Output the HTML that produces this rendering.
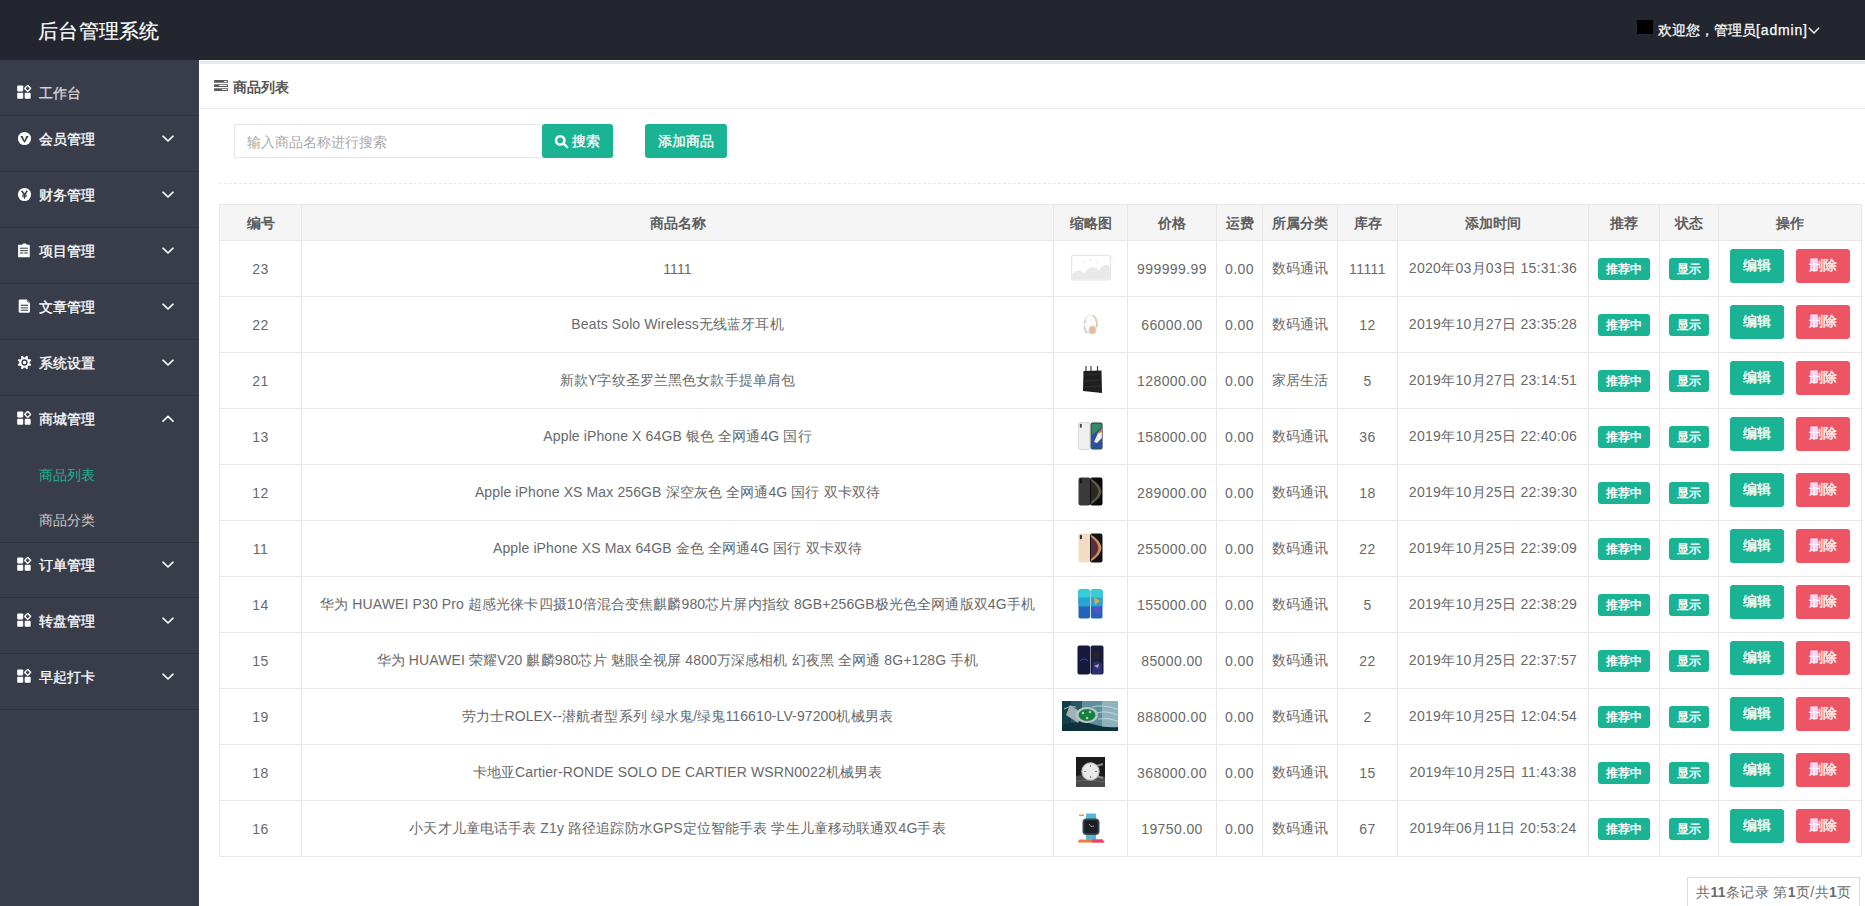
<!DOCTYPE html>
<html><head><meta charset="utf-8">
<style>
*{margin:0;padding:0;box-sizing:border-box}
html,body{width:1865px;height:906px;overflow:hidden;background:#fff;font-family:"Liberation Sans",sans-serif;font-size:14px;color:#666}
.hd{position:absolute;left:0;top:0;width:1865px;height:60px;background:#23262E}
.logo{position:absolute;left:38px;top:17px;font-size:20px;line-height:28px;color:#fff;letter-spacing:.3px;-webkit-text-stroke-width:.2px}
.user{position:absolute;left:1637px;top:19px;height:22px;color:#fff;font-size:14px;line-height:22px;white-space:nowrap}
.user .sq{position:absolute;left:0;top:1px;width:16px;height:14px;background:#000}
.user .t{position:absolute;left:21px;top:0;-webkit-text-stroke-width:.25px}
.side{position:absolute;left:0;top:60px;width:199px;height:846px;background:#393D49}
.it{position:absolute;left:0;width:199px;height:45px;line-height:45px;color:#fff}
.it .ic{position:absolute;left:17px;top:15px;width:15px;height:15px}
.it .tx{position:absolute;left:39px;top:1px;-webkit-text-stroke-width:.3px}
.it .ar{position:absolute;left:162px;top:19px;width:12px;height:8px}
.sep{position:absolute;left:0;width:199px;height:1px;background:#2F323B}
.sub{position:absolute;left:39px;height:45px;line-height:45px;color:#ccc;padding-top:1px}
.main{position:absolute;left:199px;top:60px;width:1666px;height:846px;background:#fff}
.strip{position:absolute;left:1px;top:1px;width:1665px;height:3px;background:#E6E7EC}
.ttl{position:absolute;left:1px;top:5px;width:1665px;height:44px;border-bottom:1px solid #e7eaec}
.ttl .ic{position:absolute;left:15px;top:20px}
.ttl .tx{position:absolute;left:33px;top:12px;line-height:20px;font-weight:bold;color:#555;font-size:14px}
.inp{position:absolute;left:35px;top:64px;width:308px;height:34px;border:1px solid #e5e6e7;border-right:none;border-radius:2px 0 0 2px;color:#aaa;font-size:14px;line-height:34px;padding-left:12px}
.btn{position:absolute;height:34px;line-height:34px;color:#fff;background:#1AB394;border-radius:3px;text-align:center;font-size:14px;-webkit-text-stroke-width:.3px}
.dash{position:absolute;left:20px;top:123px;width:1646px;height:1px;border-top:1px dashed #e7eaec}
table{position:absolute;left:20px;top:144px;border-collapse:collapse;table-layout:fixed}
th,td{border:1px solid #e7e7e7;text-align:center;padding:0;overflow:hidden;white-space:nowrap}
th{height:36px;padding-top:2px;background:#F5F5F6;font-weight:bold;color:#5d5d5d;font-size:14px}
td{height:56px;padding-top:1px;color:#676a6c;font-size:14px;letter-spacing:.12px}
td.n{letter-spacing:.4px}
td.d{letter-spacing:.28px}
.bdg{display:inline-block;height:22px;line-height:22px;color:#fff;background:#1AB394;border-radius:3px;font-size:12px;font-weight:bold;vertical-align:middle;position:relative;top:0}
.ob{display:inline-block;width:54px;height:34px;line-height:32px;color:#fff;border-radius:3px;font-size:14px;-webkit-text-stroke-width:.35px;vertical-align:middle;position:relative;top:-3px}
.pg{position:absolute;left:1488px;top:817px;width:173px;height:40px;border:1px solid #ddd;border-bottom:none;font-size:14px;line-height:29px;padding-left:8px;color:#676a6c;letter-spacing:.38px;white-space:nowrap}

.bs{padding-left:17px}
.user .t{letter-spacing:0}

</style></head><body>
<div class="hd">
  <div class="logo">后台管理系统</div>
  <div class="user"><span class="sq"></span><span class="t">欢迎您，管理员<span style="letter-spacing:.85px">[admin]</span></span></div>
  <svg style="position:absolute;left:1807px;top:26px" width="14" height="10" viewBox="0 0 14 10"><path d="M1.8 1.8 L7 7 L12.2 1.8" fill="none" stroke="#fff" stroke-width="1.4"/></svg>
</div>
<div class="side">
<div class="it" style="top:10px;color:rgba(255,255,255,.75)"><svg class="ic" width="16" height="16" viewBox="0 0 16 16"><rect x="0.2" y="0.4" width="6.4" height="6.4" rx="1" fill="#fff"/><rect x="9.1" y="1.3" width="4.6" height="4.6" rx="0.6" transform="rotate(45 11.4 3.6)" fill="none" stroke="#fff" stroke-width="1.5"/><rect x="0.2" y="8.3" width="6.4" height="6.4" rx="1" fill="#fff"/><rect x="8.2" y="8.3" width="6.4" height="6.4" rx="1" fill="#fff"/></svg><span class="tx">工作台</span></div>
<div class="it" style="top:56px"><svg class="ic" width="16" height="16" viewBox="0 0 16 16"><circle cx="8" cy="8" r="7" fill="#fff"/><path d="M3.6 5.2 L6 5.2 L8 10.2 L10 5.2 L12.4 5.2 L8.4 12.2 L7.6 12.2 Z" fill="#393D49"/></svg><span class="tx">会员管理</span><svg class="ar" width="12" height="8" viewBox="0 0 12 8"><path d="M1 1.2 L6 6 L11 1.2" fill="none" stroke="#fff" stroke-width="1.6" stroke-linecap="round" stroke-linejoin="round"/></svg></div>
<div class="it" style="top:112px"><svg class="ic" width="16" height="16" viewBox="0 0 16 16"><circle cx="8" cy="8" r="7" fill="#fff"/><path d="M5 4 L8 8.2 L11 4" fill="none" stroke="#393D49" stroke-width="1.6"/><path d="M8 8 V12.5 M5.6 8.6 H10.4 M5.6 10.4 H10.4" fill="none" stroke="#393D49" stroke-width="1.2"/></svg><span class="tx">财务管理</span><svg class="ar" width="12" height="8" viewBox="0 0 12 8"><path d="M1 1.2 L6 6 L11 1.2" fill="none" stroke="#fff" stroke-width="1.6" stroke-linecap="round" stroke-linejoin="round"/></svg></div>
<div class="it" style="top:168px"><svg class="ic" width="16" height="16" viewBox="0 0 16 16"><path d="M1.2 1.8 H5.5 L6.5 0.6 H9.5 L10.5 1.8 H13.6 V15.2 H1.2 Z" fill="#fff"/><rect x="3.2" y="5" width="8.4" height="1.1" fill="#393D49"/><rect x="3.2" y="7.6" width="8.4" height="1.1" fill="#393D49"/><rect x="3.2" y="10.1" width="3.6" height="1.1" fill="#393D49"/><rect x="7.8" y="10.1" width="3.8" height="1.1" fill="#393D49"/></svg><span class="tx">项目管理</span><svg class="ar" width="12" height="8" viewBox="0 0 12 8"><path d="M1 1.2 L6 6 L11 1.2" fill="none" stroke="#fff" stroke-width="1.6" stroke-linecap="round" stroke-linejoin="round"/></svg></div>
<div class="it" style="top:224px"><svg class="ic" width="16" height="16" viewBox="0 0 16 16"><path d="M3.3 0.6 H10.6 L13.8 3.8 V13.2 Q13.8 14.7 12.3 14.7 H3.3 Q1.8 14.7 1.8 13.2 V2.1 Q1.8 0.6 3.3 0.6 Z" fill="#fff"/><path d="M10.6 0.9 Q10.9 3.4 13.6 3.9" fill="none" stroke="#6b6f7a" stroke-width="1.1"/><rect x="4" y="6.1" width="7.8" height="1.2" fill="#393D49"/><rect x="4" y="8.9" width="7.8" height="1.1" fill="#393D49"/><rect x="4" y="11.4" width="7.8" height="1.1" fill="#393D49"/></svg><span class="tx">文章管理</span><svg class="ar" width="12" height="8" viewBox="0 0 12 8"><path d="M1 1.2 L6 6 L11 1.2" fill="none" stroke="#fff" stroke-width="1.6" stroke-linecap="round" stroke-linejoin="round"/></svg></div>
<div class="it" style="top:280px"><svg class="ic" width="16" height="16" viewBox="0 0 16 16"><path d="M8.58 2.83 L9.78 0.82 L11.82 1.66 L11.24 3.93 L11.68 4.32 L12.07 4.76 L14.34 4.18 L15.18 6.22 L13.17 7.42 L13.20 8.00 L13.17 8.58 L15.18 9.78 L14.34 11.82 L12.07 11.24 L11.68 11.68 L11.24 12.07 L11.82 14.34 L9.78 15.18 L8.58 13.17 L8.00 13.20 L7.42 13.17 L6.22 15.18 L4.18 14.34 L4.76 12.07 L4.32 11.68 L3.93 11.24 L1.66 11.82 L0.82 9.78 L2.83 8.58 L2.80 8.00 L2.83 7.42 L0.82 6.22 L1.66 4.18 L3.93 4.76 L4.32 4.32 L4.76 3.93 L4.18 1.66 L6.22 0.82 L7.42 2.83 L8.00 2.80 Z" fill="#fff"/><circle cx="8" cy="8" r="5.3" fill="#fff"/><circle cx="8" cy="8" r="2.6" fill="none" stroke="#393D49" stroke-width="1.5"/></svg><span class="tx">系统设置</span><svg class="ar" width="12" height="8" viewBox="0 0 12 8"><path d="M1 1.2 L6 6 L11 1.2" fill="none" stroke="#fff" stroke-width="1.6" stroke-linecap="round" stroke-linejoin="round"/></svg></div>
<div class="it" style="top:336px"><svg class="ic" width="16" height="16" viewBox="0 0 16 16"><rect x="0.2" y="0.4" width="6.4" height="6.4" rx="1" fill="#fff"/><rect x="9.1" y="1.3" width="4.6" height="4.6" rx="0.6" transform="rotate(45 11.4 3.6)" fill="none" stroke="#fff" stroke-width="1.5"/><rect x="0.2" y="8.3" width="6.4" height="6.4" rx="1" fill="#fff"/><rect x="8.2" y="8.3" width="6.4" height="6.4" rx="1" fill="#fff"/></svg><span class="tx">商城管理</span><svg class="ar" width="12" height="8" viewBox="0 0 12 8"><path d="M1 6.2 L6 1.4 L11 6.2" fill="none" stroke="#fff" stroke-width="1.6" stroke-linecap="round" stroke-linejoin="round"/></svg></div>
<div class="it" style="top:482px"><svg class="ic" width="16" height="16" viewBox="0 0 16 16"><rect x="0.2" y="0.4" width="6.4" height="6.4" rx="1" fill="#fff"/><rect x="9.1" y="1.3" width="4.6" height="4.6" rx="0.6" transform="rotate(45 11.4 3.6)" fill="none" stroke="#fff" stroke-width="1.5"/><rect x="0.2" y="8.3" width="6.4" height="6.4" rx="1" fill="#fff"/><rect x="8.2" y="8.3" width="6.4" height="6.4" rx="1" fill="#fff"/></svg><span class="tx">订单管理</span><svg class="ar" width="12" height="8" viewBox="0 0 12 8"><path d="M1 1.2 L6 6 L11 1.2" fill="none" stroke="#fff" stroke-width="1.6" stroke-linecap="round" stroke-linejoin="round"/></svg></div>
<div class="it" style="top:538px"><svg class="ic" width="16" height="16" viewBox="0 0 16 16"><rect x="0.2" y="0.4" width="6.4" height="6.4" rx="1" fill="#fff"/><rect x="9.1" y="1.3" width="4.6" height="4.6" rx="0.6" transform="rotate(45 11.4 3.6)" fill="none" stroke="#fff" stroke-width="1.5"/><rect x="0.2" y="8.3" width="6.4" height="6.4" rx="1" fill="#fff"/><rect x="8.2" y="8.3" width="6.4" height="6.4" rx="1" fill="#fff"/></svg><span class="tx">转盘管理</span><svg class="ar" width="12" height="8" viewBox="0 0 12 8"><path d="M1 1.2 L6 6 L11 1.2" fill="none" stroke="#fff" stroke-width="1.6" stroke-linecap="round" stroke-linejoin="round"/></svg></div>
<div class="it" style="top:594px"><svg class="ic" width="16" height="16" viewBox="0 0 16 16"><rect x="0.2" y="0.4" width="6.4" height="6.4" rx="1" fill="#fff"/><rect x="9.1" y="1.3" width="4.6" height="4.6" rx="0.6" transform="rotate(45 11.4 3.6)" fill="none" stroke="#fff" stroke-width="1.5"/><rect x="0.2" y="8.3" width="6.4" height="6.4" rx="1" fill="#fff"/><rect x="8.2" y="8.3" width="6.4" height="6.4" rx="1" fill="#fff"/></svg><span class="tx">早起打卡</span><svg class="ar" width="12" height="8" viewBox="0 0 12 8"><path d="M1 1.2 L6 6 L11 1.2" fill="none" stroke="#fff" stroke-width="1.6" stroke-linecap="round" stroke-linejoin="round"/></svg></div>
<div class="sep" style="top:55px"></div>
<div class="sep" style="top:111px"></div>
<div class="sep" style="top:167px"></div>
<div class="sep" style="top:223px"></div>
<div class="sep" style="top:279px"></div>
<div class="sep" style="top:335px"></div>
<div class="sep" style="top:482px"></div>
<div class="sep" style="top:537px"></div>
<div class="sep" style="top:593px"></div>
<div class="sep" style="top:649px"></div>
<div class="sub" style="top:392px;color:#1AB394">商品列表</div>
<div class="sub" style="top:437px">商品分类</div>
</div>
<div class="main">
  <div class="strip"></div>
  <div class="ttl"><span class="tx">商品列表</span></div>
  <div class="inp">输入商品名称进行搜索</div>
  <div class="btn bs" style="left:343px;top:64px;width:71px">搜索</div>
  <div class="btn" style="left:446px;top:64px;width:82px">添加商品</div>
  <div class="dash"></div>
<table><colgroup><col style="width:82px"><col style="width:752px"><col style="width:74px"><col style="width:89px"><col style="width:46px"><col style="width:75px"><col style="width:60px"><col style="width:191px"><col style="width:71px"><col style="width:59px"><col style="width:143px"></colgroup>
<tr><th>编号</th><th>商品名称</th><th>缩略图</th><th>价格</th><th>运费</th><th>所属分类</th><th>库存</th><th>添加时间</th><th>推荐</th><th>状态</th><th>操作</th></tr>
<tr><td class="n">23</td><td>1111</td><td><span class="th th-ph"></span></td><td class="n">999999.99</td><td class="n">0.00</td><td>数码通讯</td><td class="n">11111</td><td class="d">2020年03月03日 15:31:36</td><td><span class="bdg" style="width:52px">推荐中</span></td><td><span class="bdg" style="width:40px">显示</span></td><td><span class="ob" style="background:#1AB394">编辑</span><span class="ob" style="background:#ED5565;margin-left:12px">删除</span></td></tr>
<tr><td class="n">22</td><td>Beats Solo Wireless无线蓝牙耳机</td><td><span class="th th-hp"></span></td><td class="n">66000.00</td><td class="n">0.00</td><td>数码通讯</td><td class="n">12</td><td class="d">2019年10月27日 23:35:28</td><td><span class="bdg" style="width:52px">推荐中</span></td><td><span class="bdg" style="width:40px">显示</span></td><td><span class="ob" style="background:#1AB394">编辑</span><span class="ob" style="background:#ED5565;margin-left:12px">删除</span></td></tr>
<tr><td class="n">21</td><td>新款Y字纹圣罗兰黑色女款手提单肩包</td><td><span class="th th-bag"></span></td><td class="n">128000.00</td><td class="n">0.00</td><td>家居生活</td><td class="n">5</td><td class="d">2019年10月27日 23:14:51</td><td><span class="bdg" style="width:52px">推荐中</span></td><td><span class="bdg" style="width:40px">显示</span></td><td><span class="ob" style="background:#1AB394">编辑</span><span class="ob" style="background:#ED5565;margin-left:12px">删除</span></td></tr>
<tr><td class="n">13</td><td>Apple iPhone X 64GB 银色 全网通4G 国行</td><td><span class="th th-ipx"></span></td><td class="n">158000.00</td><td class="n">0.00</td><td>数码通讯</td><td class="n">36</td><td class="d">2019年10月25日 22:40:06</td><td><span class="bdg" style="width:52px">推荐中</span></td><td><span class="bdg" style="width:40px">显示</span></td><td><span class="ob" style="background:#1AB394">编辑</span><span class="ob" style="background:#ED5565;margin-left:12px">删除</span></td></tr>
<tr><td class="n">12</td><td>Apple iPhone XS Max 256GB 深空灰色 全网通4G 国行 双卡双待</td><td><span class="th th-ixsg"></span></td><td class="n">289000.00</td><td class="n">0.00</td><td>数码通讯</td><td class="n">18</td><td class="d">2019年10月25日 22:39:30</td><td><span class="bdg" style="width:52px">推荐中</span></td><td><span class="bdg" style="width:40px">显示</span></td><td><span class="ob" style="background:#1AB394">编辑</span><span class="ob" style="background:#ED5565;margin-left:12px">删除</span></td></tr>
<tr><td class="n">11</td><td>Apple iPhone XS Max 64GB 金色 全网通4G 国行 双卡双待</td><td><span class="th th-ixsgold"></span></td><td class="n">255000.00</td><td class="n">0.00</td><td>数码通讯</td><td class="n">22</td><td class="d">2019年10月25日 22:39:09</td><td><span class="bdg" style="width:52px">推荐中</span></td><td><span class="bdg" style="width:40px">显示</span></td><td><span class="ob" style="background:#1AB394">编辑</span><span class="ob" style="background:#ED5565;margin-left:12px">删除</span></td></tr>
<tr><td class="n">14</td><td>华为 HUAWEI P30 Pro 超感光徕卡四摄10倍混合变焦麒麟980芯片屏内指纹 8GB+256GB极光色全网通版双4G手机</td><td><span class="th th-p30"></span></td><td class="n">155000.00</td><td class="n">0.00</td><td>数码通讯</td><td class="n">5</td><td class="d">2019年10月25日 22:38:29</td><td><span class="bdg" style="width:52px">推荐中</span></td><td><span class="bdg" style="width:40px">显示</span></td><td><span class="ob" style="background:#1AB394">编辑</span><span class="ob" style="background:#ED5565;margin-left:12px">删除</span></td></tr>
<tr><td class="n">15</td><td>华为 HUAWEI 荣耀V20 麒麟980芯片 魅眼全视屏 4800万深感相机 幻夜黑 全网通 8G+128G 手机</td><td><span class="th th-v20"></span></td><td class="n">85000.00</td><td class="n">0.00</td><td>数码通讯</td><td class="n">22</td><td class="d">2019年10月25日 22:37:57</td><td><span class="bdg" style="width:52px">推荐中</span></td><td><span class="bdg" style="width:40px">显示</span></td><td><span class="ob" style="background:#1AB394">编辑</span><span class="ob" style="background:#ED5565;margin-left:12px">删除</span></td></tr>
<tr><td class="n">19</td><td>劳力士ROLEX--潜航者型系列 绿水鬼/绿鬼116610-LV-97200机械男表</td><td><span class="th th-rolex"></span></td><td class="n">888000.00</td><td class="n">0.00</td><td>数码通讯</td><td class="n">2</td><td class="d">2019年10月25日 12:04:54</td><td><span class="bdg" style="width:52px">推荐中</span></td><td><span class="bdg" style="width:40px">显示</span></td><td><span class="ob" style="background:#1AB394">编辑</span><span class="ob" style="background:#ED5565;margin-left:12px">删除</span></td></tr>
<tr><td class="n">18</td><td>卡地亚Cartier-RONDE SOLO DE CARTIER WSRN0022机械男表</td><td><span class="th th-cartier"></span></td><td class="n">368000.00</td><td class="n">0.00</td><td>数码通讯</td><td class="n">15</td><td class="d">2019年10月25日 11:43:38</td><td><span class="bdg" style="width:52px">推荐中</span></td><td><span class="bdg" style="width:40px">显示</span></td><td><span class="ob" style="background:#1AB394">编辑</span><span class="ob" style="background:#ED5565;margin-left:12px">删除</span></td></tr>
<tr><td class="n">16</td><td>小天才儿童电话手表 Z1y 路径追踪防水GPS定位智能手表 学生儿童移动联通双4G手表</td><td><span class="th th-watch"></span></td><td class="n">19750.00</td><td class="n">0.00</td><td>数码通讯</td><td class="n">67</td><td class="d">2019年06月11日 20:53:24</td><td><span class="bdg" style="width:52px">推荐中</span></td><td><span class="bdg" style="width:40px">显示</span></td><td><span class="ob" style="background:#1AB394">编辑</span><span class="ob" style="background:#ED5565;margin-left:12px">删除</span></td></tr>
</table>
  <div class="pg">共<b>11</b>条记录 第<b>1</b>页/共<b>1</b>页</div>
</div>
<svg style="position:absolute;left:214px;top:80px" width="14" height="11" viewBox="0 0 14 11"><g fill="#5a5a5a"><rect x="0" y="0" width="14" height="2.8" rx="0.6"/><rect x="0" y="4.2" width="14" height="2.8" rx="0.6"/><rect x="0" y="8.2" width="14" height="2.8" rx="0.6"/></g><g fill="#fff"><rect x="10" y="0.9" width="3" height="1" rx="0.5"/><rect x="5" y="5.1" width="8" height="1" rx="0.5"/><rect x="8" y="9.1" width="5" height="1" rx="0.5"/></g></svg>
<svg style="position:absolute;left:554px;top:134px" width="15" height="15" viewBox="0 0 15 15"><circle cx="6.2" cy="6.4" r="4.2" fill="none" stroke="#fff" stroke-width="2.5"/><path d="M9.4 9.4 L13.3 13.3" stroke="#fff" stroke-width="2.2" stroke-linecap="round"/></svg>
<svg style="position:absolute;left:1070px;top:254px" width="44" height="28" viewBox="0 0 44 28"><rect x="1.6" y="1.3" width="38.8" height="24.6" rx="1.5" fill="#fff" stroke="#e6e6e6" stroke-width="1.3"/><path d="M2.3 25.2 L2.3 20 Q6 15.5 10 16.8 Q12.5 18 14.5 19 Q18 13 22.5 13 Q27 13.5 28.5 17 Q32 11 36.5 10.5 Q39 11.5 39.7 13.5 L39.7 25.2 Z" fill="#e9e9e9"/><circle cx="13.5" cy="8" r="1.2" fill="#eeeeee"/><circle cx="20" cy="6" r="1.2" fill="#eeeeee"/><circle cx="27.5" cy="8.5" r="1.2" fill="#eeeeee"/><path d="M41 1 V6 M38.5 3.5 H43.5" stroke="#eeeeee" stroke-width="0.9"/></svg>
<svg style="position:absolute;left:1082px;top:314px" width="17" height="22" viewBox="0 0 17 22"><ellipse cx="8.5" cy="10" rx="6.3" ry="9" fill="#fbfbfb" stroke="#e4e4e4" stroke-width="1.2"/><path d="M11 1.6 Q15.5 4 14.8 13" fill="none" stroke="#d8c9a6" stroke-width="1.6"/><rect x="2" y="6.5" width="2.2" height="2.5" fill="#d0d0d0"/><path d="M2.5 12 Q2 17 5 19.5" stroke="#cfcfcf" stroke-width="1.4" fill="none"/><ellipse cx="10.5" cy="16" rx="4" ry="4.6" fill="#e8cdbb"/><ellipse cx="10.5" cy="16" rx="2.4" ry="3" fill="#dfb9a2"/></svg>
<svg style="position:absolute;left:1082px;top:365px" width="21" height="29" viewBox="0 0 21 29"><path d="M4 6 L4 1 M9 6 L9 1 M15.5 6 L15.5 1" stroke="#444" stroke-width="1.2"/><path d="M1.5 6 L19.5 5.5 L20 28 L1 26 Z" fill="#1f1f1f"/><path d="M3 10 L18 9 M3 16 L18 15 M3 22 L18 21" stroke="#333" stroke-width="0.8"/></svg>
<svg style="position:absolute;left:1078px;top:422px" width="25" height="28" viewBox="0 0 25 28"><rect x="0.5" y="0.5" width="11.5" height="27" rx="2" fill="#f0f0f0" stroke="#cfcfcf" stroke-width="0.8"/><rect x="1.8" y="1.8" width="2" height="4" rx="1" fill="#444"/><rect x="12.6" y="0.5" width="12" height="27" rx="2" fill="#333"/><rect x="13.4" y="1.5" width="10.4" height="25" fill="#2f8a6a"/><path d="M13.4 26.5 L13.4 14 L19 9 L23.8 5 L23.8 26.5 Z" fill="#2c4fa0"/><path d="M16 20 L20 11 L23.8 8 L23.8 16 L19 21 Z" fill="#f0f0ef"/><path d="M19 12 L23.8 6 L23.8 10 Z" fill="#e86b2c"/></svg>
<svg style="position:absolute;left:1078px;top:477px" width="25" height="29" viewBox="0 0 25 29"><rect x="0.5" y="0.5" width="12" height="28" rx="2.2" fill="#3a3a3c"/><rect x="1.8" y="1.8" width="2.2" height="4.5" rx="1" fill="#111"/><rect x="12" y="0.5" width="12.5" height="28" rx="2.2" fill="#0b0b0b"/><path d="M13 1.5 Q23 8 23.5 14.5 Q23 21 13 27.5 Z" fill="#5c5a44"/><path d="M13 4 Q20 9 20.5 14.5 Q20 20 13 25 Z" fill="#2b2a22"/></svg>
<svg style="position:absolute;left:1078px;top:533px" width="25" height="30" viewBox="0 0 25 30"><rect x="0.5" y="0.5" width="12" height="29" rx="2.2" fill="#f3dcc4"/><rect x="1.8" y="1.8" width="2.2" height="4.5" rx="1" fill="#333"/><rect x="12" y="0.5" width="12.5" height="29" rx="2.2" fill="#111"/><path d="M13 1.5 Q23 8 23.5 15 Q23 22 13 28.5 Z" fill="#c9905c"/><path d="M13 4 Q20 9 20.5 15 Q20 21 13 26 Z" fill="#5a2e3e"/></svg>
<svg style="position:absolute;left:1078px;top:589px" width="25" height="30" viewBox="0 0 25 30"><rect x="0.5" y="0.5" width="11.5" height="29" rx="1.8" fill="#2563b8"/><rect x="0.5" y="0.5" width="11.5" height="17" rx="1.8" fill="#27a6d4"/><rect x="0.5" y="0.5" width="11.5" height="8" rx="1.8" fill="#33d0d8"/><rect x="12.8" y="0.5" width="11.7" height="29" rx="1.8" fill="#2563b8"/><rect x="12.8" y="0.5" width="11.7" height="17" rx="1.8" fill="#27a6d4"/><rect x="12.8" y="0.5" width="11.7" height="8" rx="1.8" fill="#33d0d8"/><path d="M16 8 L22 12 L17 16 Z" fill="#e8a73a"/><path d="M14 20 L23 17 L22 26 Z" fill="#5a4fc8"/></svg>
<svg style="position:absolute;left:1077px;top:645px" width="27" height="30" viewBox="0 0 27 30"><rect x="0.5" y="0.5" width="12.5" height="29" rx="2" fill="#161a3a"/><path d="M3 16 Q7 12 11 16" stroke="#3a4ab0" stroke-width="1" fill="none"/><rect x="13.5" y="0.5" width="13" height="29" rx="2" fill="#1a1c3c"/><circle cx="19.5" cy="10" r="3.2" fill="#2a2426"/><path d="M15 29 L16 18 Q20 14 25 19 L25 29 Z" fill="#2a2f7a"/><path d="M17 21 L22 19 L21 23 Z" fill="#c9a090"/></svg>
<svg style="position:absolute;left:1062px;top:701px" width="56" height="30" viewBox="0 0 56 30"><rect width="56" height="30" fill="#5d8f9c"/><rect width="20" height="30" fill="#2a5663"/><rect width="9" height="30" fill="#143e4a"/><rect x="40" width="16" height="30" fill="#8fb3bd"/><path d="M30 6 Q40 3 55 8 M34 12 Q45 9 55 14 M36 18 Q46 16 56 20 M2 8 Q8 4 14 6" stroke="#d6e6ea" stroke-width="0.9" fill="none" opacity="0.8"/><path d="M0 24 Q18 18 34 24 Q44 27 56 26 L56 30 L0 30 Z" fill="#0e323b"/><path d="M8 4 L20 12 L16 22 L4 14 Z" fill="#9fb2b6"/><ellipse cx="25" cy="14" rx="11" ry="8" fill="#b9c6c8"/><ellipse cx="25" cy="14" rx="8.5" ry="6" fill="#1a7d40"/><circle cx="21" cy="12" r="1.3" fill="#8ee0a8"/><circle cx="28" cy="11" r="1.3" fill="#8ee0a8"/><circle cx="25" cy="17" r="1.3" fill="#8ee0a8"/></svg>
<svg style="position:absolute;left:1076px;top:757px" width="29" height="30" viewBox="0 0 29 30"><rect width="29" height="30" fill="#1b1b1b"/><path d="M0 19 Q14 16 29 20 L29 30 L0 30 Z" fill="#4a4a4a"/><path d="M0 24 Q14 22 29 25" stroke="#666" stroke-width="1" fill="none"/><path d="M20 9 L27 7 M20 19 L27 21" stroke="#888" stroke-width="2"/><circle cx="14.5" cy="14.5" r="9.2" fill="#bdbdbd"/><circle cx="14.5" cy="14.5" r="8" fill="#e9e9e9"/><path d="M14.5 8 V10 M14.5 19 V21 M8 14.5 H10 M19 14.5 H21" stroke="#777" stroke-width="0.9"/></svg>
<svg style="position:absolute;left:1076px;top:813px" width="30" height="30" viewBox="0 0 30 30"><rect x="3" y="1.5" width="5" height="1.6" fill="#f59a3a"/><rect x="10" y="0.5" width="10" height="7" rx="1" fill="#56b6d6"/><rect x="10" y="21" width="10" height="6" rx="1" fill="#56b6d6"/><rect x="6.5" y="5.5" width="17" height="16.5" rx="4" fill="#3c4650"/><rect x="8.3" y="7.3" width="13.4" height="12.9" rx="2.5" fill="#1a1f26"/><path d="M15 13.5 L13 11 M15 13.5 L18 13" stroke="#ddd" stroke-width="0.6"/><path d="M1.5 29.5 L3.5 26.5 L26.5 26.5 L28.5 29.5 Z" fill="#f27a38"/><path d="M16 26.5 L26.5 26.5 L28.5 29.5 L16 29.5 Z" fill="#e8407a"/></svg>
</body></html>
